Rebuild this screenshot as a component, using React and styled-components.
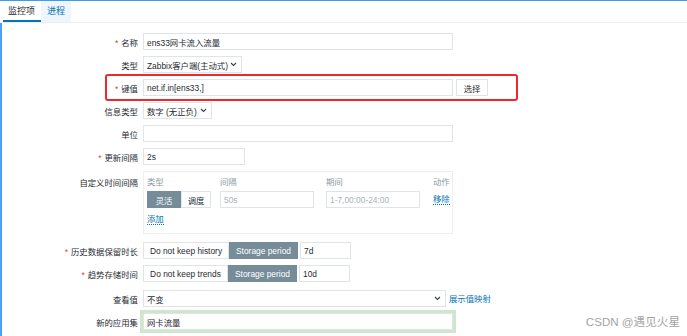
import React from "react";
import styled, { createGlobalStyle } from "styled-components";

const GlobalStyle = createGlobalStyle`
  body {
    margin: 0;
    background: #ffffff;
    font-family: "Liberation Sans", "Noto Sans CJK SC", sans-serif;
    color: #1f2c33;
  }
`;

const Page = styled.div`
  position: relative;
  width: 687px;
  height: 336px;
  overflow: hidden;
  border-top: 1px solid #3c9ee8;
  box-sizing: border-box;
`;

const TabBar = styled.div`
  display: flex;
  height: 21px;
  padding-left: 3px;
  border-bottom: 1px solid #edf0f2;
`;

const Tab = styled.div`
  display: flex;
  align-items: center;
  padding: 0 ${({ active }) => (active ? "5px" : "6px")};
  font-size: 9px;
  color: ${({ active }) => (active ? "#1f2c33" : "#0275b8")};
  background: ${({ active }) => (active ? "#ffffff" : "#eef6fc")};
  border-bottom: 2px solid ${({ active }) => (active ? "#0275b8" : "transparent")};
  box-sizing: border-box;
  min-width: ${({ active }) => (active ? "38px" : "28px")};
`;

const Form = styled.div`
  display: flex;
  flex-direction: column;
  gap: 6px;
  height: 100%;
  padding-top: 10px;
  border-left: 2px solid #4aa3f0;
  box-sizing: border-box;
`;

const Row = styled.div`
  position: relative;
  display: grid;
  grid-template-columns: 136px 1fr;
  column-gap: 5px;
  align-items: ${({ top }) => (top ? "start" : "center")};
  margin-top: ${({ mt }) => mt || 0}px;
`;

const Label = styled.div`
  text-align: right;
  font-size: 8.4px;
  color: #1f2c33;
  padding-top: ${({ pt }) => pt || 0}px;
  white-space: nowrap;
`;

const Star = styled.span`
  color: #e33734;
  margin-right: 3px;
`;

const Field = styled.div`
  display: flex;
  align-items: center;
  gap: ${({ gap }) => gap || 0}px;
`;

const Input = styled.div`
  height: 17px;
  width: ${({ w }) => w}px;
  box-sizing: border-box;
  border: 1px solid #dfe4e7;
  padding: 0 3px;
  display: flex;
  align-items: center;
  font-size: 8.4px;
  color: ${({ muted }) => (muted ? "#a7b2b8" : "#1f2c33")};
  background: #fff;
  box-shadow: ${({ glow }) => (glow ? "0 0 0 3px #cde6cd" : "none")};
`;

const Select = styled(Input)`
  justify-content: space-between;
  padding-right: 4px;
`;

const Chevron = () => (
  <svg width="7" height="5" viewBox="0 0 7 5">
    <path d="M1 1 L3.5 3.5 L6 1" fill="none" stroke="#3a464c" strokeWidth="1.1" />
  </svg>
);

const Button = styled.div`
  height: 17px;
  width: 32px;
  box-sizing: border-box;
  border: 1px solid #dfe4e7;
  display: flex;
  align-items: center;
  justify-content: center;
  font-size: 8.4px;
  color: #1f2c33;
  background: #fff;
`;

const Segmented = styled.div`
  display: flex;
  height: 17px;
`;

const Segment = styled.div`
  display: flex;
  align-items: center;
  justify-content: center;
  width: ${({ w }) => w}px;
  box-sizing: border-box;
  font-size: 8.4px;
  color: ${({ on }) => (on ? "#ffffff" : "#1f2c33")};
  background: ${({ on }) => (on ? "#768d99" : "#ffffff")};
  border: 1px solid ${({ on }) => (on ? "#768d99" : "#dfe4e7")};
`;

const Highlight = styled.div`
  position: absolute;
  left: 103px;
  top: -5px;
  width: 413px;
  height: 27px;
  box-sizing: border-box;
  border: 2px solid #ea2a2f;
  border-radius: 3px;
  pointer-events: none;
`;

const IntervalBox = styled.div`
  width: 310px;
  height: 63px;
  box-sizing: border-box;
  border: 1px solid #edf0f2;
  padding: 3px 0 0 3px;
`;

const IntervalGrid = styled.div`
  display: grid;
  grid-template-columns: 73px 106px 107px auto;
  row-gap: 4px;
  align-items: center;
`;

const Head = styled.div`
  font-size: 8.4px;
  color: #8d9ba3;
  height: 12px;
  display: flex;
  align-items: center;
`;

const Link = styled.span`
  font-size: 8.4px;
  color: #0275b8;
  border-bottom: 1px dotted #0275b8;
  line-height: 10px;
  justify-self: start;
`;

const AddLink = styled(Link)`
  display: inline-block;
  margin-top: 5px;
`;

const Watermark = styled.div`
  position: absolute;
  right: 7px;
  bottom: 7px;
  font-size: 11.6px;
  color: #a4a4a4;
  font-family: "Liberation Sans", "Noto Sans CJK SC", sans-serif;
`;

export default function App() {
  return (
    <Page>
      <GlobalStyle />
      <TabBar>
        <Tab active>监控项</Tab>
        <Tab>进程</Tab>
      </TabBar>
      <Form>
        <Row>
          <Label><Star>*</Star>名称</Label>
          <Field><Input w={310}>ens33网卡流入流量</Input></Field>
        </Row>
        <Row>
          <Label>类型</Label>
          <Field>
            <Select w={99}>Zabbix客户端(主动式)<Chevron /></Select>
          </Field>
        </Row>
        <Row>
          <Highlight />
          <Label><Star>*</Star>键值</Label>
          <Field gap={3}>
            <Input w={310}>net.if.in[ens33,]</Input>
            <Button>选择</Button>
          </Field>
        </Row>
        <Row>
          <Label>信息类型</Label>
          <Field>
            <Select w={69}>数字 (无正负)<Chevron /></Select>
          </Field>
        </Row>
        <Row>
          <Label>单位</Label>
          <Field><Input w={310} /></Field>
        </Row>
        <Row>
          <Label><Star>*</Star>更新间隔</Label>
          <Field><Input w={102}>2s</Input></Field>
        </Row>
        <Row top>
          <Label pt={5}>自定义时间间隔</Label>
          <IntervalBox>
            <IntervalGrid>
              <Head>类型</Head>
              <Head>间隔</Head>
              <Head>期间</Head>
              <Head>动作</Head>
              <Segmented>
                <Segment on w={34}>灵活</Segment>
                <Segment w={30}>调度</Segment>
              </Segmented>
              <Input w={94} muted>50s</Input>
              <Input w={94} muted>1-7,00:00-24:00</Input>
              <Link>移除</Link>
            </IntervalGrid>
            <AddLink>添加</AddLink>
          </IntervalBox>
        </Row>
        <Row mt={2}>
          <Label><Star>*</Star>历史数据保留时长</Label>
          <Field gap={2}>
            <Segmented>
              <Segment w={86}>Do not keep history</Segment>
              <Segment on w={69}>Storage period</Segment>
            </Segmented>
            <Input w={51}>7d</Input>
          </Field>
        </Row>
        <Row>
          <Label><Star>*</Star>趋势存储时间</Label>
          <Field gap={2}>
            <Segmented>
              <Segment w={85}>Do not keep trends</Segment>
              <Segment on w={69}>Storage period</Segment>
            </Segmented>
            <Input w={51}>10d</Input>
          </Field>
        </Row>
        <Row mt={2}>
          <Label>查看值</Label>
          <Field gap={3}>
            <Select w={303}>不变<Chevron /></Select>
            <Link style={{ borderBottom: "none" }}>展示值映射</Link>
          </Field>
        </Row>
        <Row>
          <Label>新的应用集</Label>
          <Field><Input w={310} glow>网卡流量</Input></Field>
        </Row>
      </Form>
      <Watermark>CSDN @遇见火星</Watermark>
    </Page>
  );
}
